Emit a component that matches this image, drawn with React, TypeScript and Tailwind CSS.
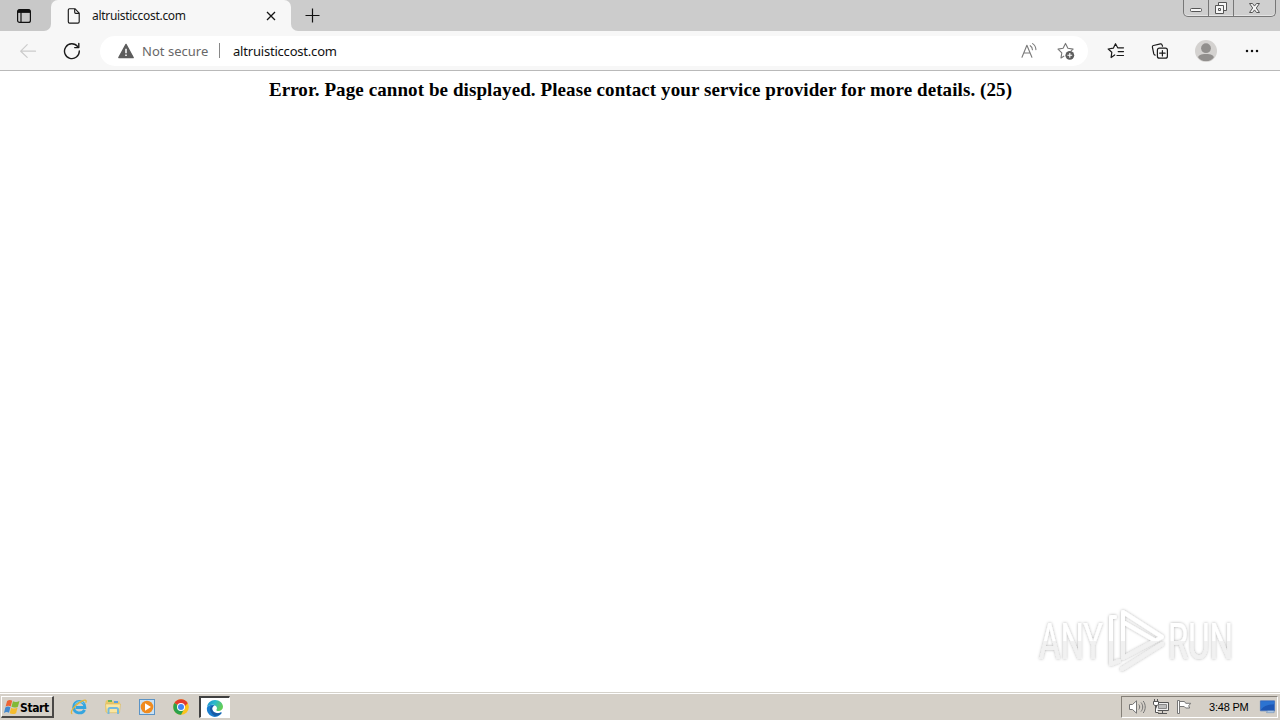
import type { ReactNode } from 'react'
import { clsx } from 'clsx'

interface IconProps {
    className?: string
}

function TabActionsIcon({ className }: IconProps) {
    return (
        <svg viewBox="0 0 16 16" className={className} fill="none" stroke="#111">
            <rect x="1.6" y="1.6" width="12.8" height="12.8" rx="2" strokeWidth="1.2" />
            <path d="M2 3.3h12" strokeWidth="3.2" />
            <path d="M5 4v10" strokeWidth="1.2" />
        </svg>
    )
}

function PageIcon({ className }: IconProps) {
    return (
        <svg viewBox="0 0 16 16" className={className} fill="none" stroke="#1a1a1a" strokeWidth="1.15" strokeLinejoin="round">
            <path d="M3.5.7h5.4l4.3 4.4v8.7a1.3 1.3 0 0 1-1.3 1.3H3.6a1.3 1.3 0 0 1-1.3-1.3V2A1.3 1.3 0 0 1 3.5.7Z" />
            <path d="M8.7.9v3.4c0 .6.4 1 1 1h3.4" />
        </svg>
    )
}

function BackIcon({ className }: IconProps) {
    return (
        <svg viewBox="0 0 18 18" className={className} fill="none" stroke="#cbcbcb" strokeWidth="1.2" strokeLinecap="round" strokeLinejoin="round">
            <path d="M16.5 9.2H2M8.2 2.7 1.7 9.2l6.5 6.2" />
        </svg>
    )
}

function ReloadIcon({ className }: IconProps) {
    return (
        <svg viewBox="0 0 18 18" className={className} fill="none" stroke="#1b1b1b" strokeWidth="1.4" strokeLinecap="round" strokeLinejoin="round">
            <path d="M16.3 9A7.4 7.4 0 1 1 14.7 4.6" />
            <path d="M15.8 1.5v4.1h-4.1" />
        </svg>
    )
}

function WarningIcon({ className }: IconProps) {
    return (
        <svg viewBox="0 0 16 16" className={className}>
            <path d="M8 1.4 15.2 14.6H.8Z" fill="#5c5c5c" stroke="#5c5c5c" strokeWidth="1.3" strokeLinejoin="round" />
            <path d="M8 5.8v4.4M8 11.6v1.5" stroke="#fff" strokeWidth="1.5" />
        </svg>
    )
}

function ReadAloudIcon({ className }: IconProps) {
    return (
        <svg viewBox="0 0 18 18" className={className} fill="none" stroke="#7a7a7a" strokeWidth="1.1" strokeLinecap="round" strokeLinejoin="round">
            <path d="m2 15.2 4.9-12 5 12M3.7 11h6.5" />
            <path d="M10.2 3.7c1.5.8 2.2 2.1 2.2 4M12.6 1.6c2.1 1.3 3.2 3.3 3.3 6" />
        </svg>
    )
}

function AddFavoriteIcon({ className }: IconProps) {
    return (
        <svg viewBox="0 0 18 18" className={className} fill="none">
            <path d="M7.2 14.1 4 15.9l.8-5.1L1 7.1l5.1-.8 2.4-4.9 2.4 4.9 5.2.8-2.2 2" stroke="#777" strokeWidth="1.1" strokeLinejoin="round" />
            <circle cx="12.8" cy="13.3" r="4.4" fill="#5d5d5d" />
            <path d="M12.8 10.9v4.8M10.4 13.3h4.8" stroke="#fff" strokeWidth="1.1" />
        </svg>
    )
}

function FavoritesIcon({ className }: IconProps) {
    return (
        <svg viewBox="0 0 18 18" className={className} fill="none" stroke="#1b1b1b" strokeWidth="1.2" strokeLinejoin="round" strokeLinecap="round">
            <path d="M7.7 12.9 4.1 15.5l.7-5.2L1.2 7l5.1-.8 2.2-4.5 2.2 4.1h5.8M11.2 9.6h5.3M10 13.5h6.5" />
        </svg>
    )
}

function CollectionsIcon({ className }: IconProps) {
    return (
        <svg viewBox="0 0 18 18" className={className} fill="none" stroke="#1b1b1b" strokeWidth="1.2" strokeLinecap="round">
            <path d="M4.2 13.1c-.8 0-1.2-.5-1.4-1.2L1.4 5.2c-.2-.9.3-1.5 1.1-1.7l6.9-1.6c.9-.2 1.5.2 1.7 1l.4 1.3" />
            <rect x="6.4" y="6.2" width="10" height="10" rx="2" />
            <path d="M11.4 8.5v5.4M8.7 11.2h5.4" />
        </svg>
    )
}

function ProfileIcon({ className }: IconProps) {
    return (
        <svg viewBox="0 0 22 22" className={className}>
            <circle cx="11" cy="11" r="11" fill="#d4d2d0" />
            <circle cx="11" cy="8.2" r="4.9" fill="#918f8d" />
            <path d="M3.2 17.4c0-2 2.5-3.4 7.8-3.4s7.8 1.4 7.8 3.4c-1.6 2.3-4.5 3.7-7.8 3.7s-6.2-1.4-7.8-3.7Z" fill="#918f8d" />
        </svg>
    )
}

function WindowsLogo({ className }: IconProps) {
    return (
        <svg viewBox="0 0 18 16" className={className}>
            <path d="M3.3 1.7C5.2.2 7 .3 8.7 1.4L7.1 7.4C5.4 6.3 3.6 6.3 1.7 7.6Z" fill="#ed6434" />
            <path d="M9.5 1.9c1.9 1.2 4.3 1.2 6.9-.2L14.7 7.7c-2.3 1.3-4.7 1.2-6.8.1Z" fill="#82b936" />
            <path d="M1.4 8.5c1.9-1.4 3.7-1.3 5.4-.2l-1.5 5.8C3.6 13 1.8 13 0 14.4Z" fill="#4389cf" />
            <path d="M7.6 8.7c2.1 1.2 4.5 1.2 6.8-.1l-1.6 5.9c-2.3 1.3-4.7 1.2-6.8.1Z" fill="#f5bc2e" />
        </svg>
    )
}

function ExplorerEIcon({ className }: IconProps) {
    return (
        <svg viewBox="0 0 18 18" className={className} fill="none">
            <path d="M14.6 11.8c-2.3 4.7-10.5 4.3-11-2.4-.3-7.5 11.2-8.3 11.3.1H5.6" stroke="#35a5df" strokeWidth="2.8" />
            <path d="M5 6.4c1.7-3.2 6.8-3.6 8.8-.8" stroke="#83d2f3" strokeWidth="1" />
            <path d="M2.3 15.9C-.8 14.9 4 7.8 10 4.1c4.6-2.9 7.4-2.5 5.7.6" stroke="#e5b638" strokeWidth="1.3" />
        </svg>
    )
}

function FolderIcon({ className }: IconProps) {
    return (
        <svg viewBox="0 0 18 18" className={className}>
            <path d="M1.5 3.5 3 2h4l1.4 1.5h7.2V14H1.5Z" fill="#e9c767" />
            <path d="M4 2h4v2H4Z" fill="#68b45a" />
            <path d="M10 3h4v2h-4Z" fill="#5a9fdd" />
            <path d="M1.5 6h15l-1 8.7h-13Z" fill="#fae6a0" stroke="#d9b85b" strokeWidth=".6" />
            <path d="M4.5 16V11.5c0-1 .5-1.5 1.5-1.5h6.5c1 0 1.5.5 1.5 1.5V16" stroke="#74b9dc" strokeWidth="2" fill="none" />
        </svg>
    )
}

function MediaPlayerIcon({ className }: IconProps) {
    return (
        <svg viewBox="0 0 18 18" className={className}>
            <rect x="1.5" y="1.5" width="15" height="15" fill="#c9e1f4" stroke="#5b93c5" />
            <circle cx="9" cy="9" r="6.3" fill="#f08b1e" />
            <path d="m7 5.3 6 3.7-6 3.7Z" fill="#fff" />
        </svg>
    )
}

function ChromeIcon({ className }: IconProps) {
    return (
        <svg viewBox="0 0 18 18" className={className}>
            <circle cx="9" cy="9" r="7.8" fill="#fbc31c" />
            <path d="M9 9 2.3 5.1a7.8 7.8 0 0 1 13.4 0Z" fill="#e33b2e" />
            <path d="M2.3 5.1A7.8 7.8 0 0 0 9 16.8L12.2 11 9 9Z" fill="#2ba24c" />
            <path d="M9 5.1h6.7L12.4 9Z" fill="#e33b2e" />
            <circle cx="9" cy="9" r="4" fill="#fff" />
            <circle cx="9" cy="9" r="3" fill="#4285f4" />
        </svg>
    )
}

function EdgeIcon({ className }: IconProps) {
    return (
        <svg viewBox="0 0 18 18" className={className}>
            <defs>
                <linearGradient id="edge-top" x1="0" y1="0" x2="1" y2=".4">
                    <stop offset="0" stopColor="#1688cf" />
                    <stop offset=".5" stopColor="#2bb9cc" />
                    <stop offset="1" stopColor="#62cd58" />
                </linearGradient>
            </defs>
            <path d="M1 8.3C1.5 4 4.8 1 9 1c4.5 0 8 3.1 8 6.8 0 2.7-2.1 4.2-4.5 4.2-2 0-2.6-.8-1.8-1.8C11.8 8.5 9.5 5.8 6.2 5.8 3.8 5.8 2 6.7 1 8.3Z" fill="url(#edge-top)" />
            <path d="M1 8.4c2-2.8 5.2-3.2 7.7-1.8C6.4 7 5.8 9 6.3 10.8c.8 3 4.5 4.5 8.8 2.7.6-.2.9.1.5.7A8 8 0 0 1 1 8.4Z" fill="#1b7fd0" />
            <path d="M8.7 6.6C4.8 6.1 3.2 9.2 4.5 12.2 5.4 14.5 7.2 16 9 17c2.4 0 4.7-1 6.2-2.8.4-.5.1-.9-.5-.6-4.2 1.5-7.7-.3-8.4-2.8-.5-1.8.2-3.5 2.4-4.2Z" fill="#175ba5" />
        </svg>
    )
}

function SpeakerIcon({ className }: IconProps) {
    return (
        <svg viewBox="0 0 18 18" className={className} fill="none" stroke="#747474">
            <path d="M1.5 6.5h3l4-3.7v12.4l-4-3.7h-3Z" fill="#fff" />
            <path d="M10.8 6.5c1.2 1.5 1.2 3.5 0 5M13 4.5c2.3 2.7 2.3 6.3 0 9M15.2 3c2.7 3.6 2.7 8.4 0 12" />
        </svg>
    )
}

function NetworkIcon({ className }: IconProps) {
    return (
        <svg viewBox="0 0 18 18" className={className} fill="none" stroke="#555">
            <path d="M4.5 4.5h12v8h-12Z" fill="#eee" />
            <path d="M6.5 6.5h8v4h-8Z" fill="#bdbdbd" stroke="#888" />
            <path d="M6 15.5h9M10.5 13v2" />
            <path d="M1.5 3.5h5v3l-1.5 1H3l-1.5-1ZM2.5 1v2.5M5.5 1v2.5M3.5 7.5v7h3" fill="#fff" />
        </svg>
    )
}

function FlagIcon({ className }: IconProps) {
    return (
        <svg viewBox="0 0 18 18" className={className} fill="none" stroke="#777">
            <path d="M4.5 3.5h5l1.2 1.8h5l-2 2.5 1 2.2h-4L9.2 8.5H4.5Z" fill="#fff" />
            <path d="M2.5 2.5h2v13h-2Z" fill="#fff" />
        </svg>
    )
}

function DesktopIcon({ className }: IconProps) {
    return (
        <svg viewBox="0 0 18 16" className={className}>
            <path d="M1.5 1.5h15v10.5h-15Z" fill="#1d57b5" stroke="#4b77bd" />
            <path d="M2 11c3-4 7-5.5 14-6v-3H2Z" fill="#2c73d1" />
            <path d="M9 12h7v2H8Z" fill="#b9d2ed" stroke="#567ba8" strokeWidth=".5" />
        </svg>
    )
}

function Watermark({ className }: IconProps) {
    return (
        <svg viewBox="0 0 244 76" className={className}>
            <defs>
                <linearGradient id="mark-fill" x1="0" y1="0" x2="0" y2="76" gradientUnits="userSpaceOnUse">
                    <stop offset=".51" stopColor="#fff" />
                    <stop offset=".52" stopColor="#f1f1f1" />
                </linearGradient>
                <filter id="mark-shadow" x="-10%" y="-10%" width="120%" height="120%">
                    <feDropShadow dx="0" dy="0" stdDeviation="1.7" floodColor="#000" floodOpacity=".32" />
                </filter>
            </defs>
            <g filter="url(#mark-shadow)">
                <g fill="url(#mark-fill)" className="font-['Roboto',sans-serif] text-[50px] font-normal">
                    <text x="7" y="57" textLength="64" lengthAdjust="spacingAndGlyphs">ANY</text>
                    <text x="136" y="57" textLength="65" lengthAdjust="spacingAndGlyphs">RUN</text>
                </g>
                <g fill="none" stroke="url(#mark-fill)" strokeWidth="4" strokeLinejoin="round" strokeLinecap="round">
                    <path d="M83 15h-4v47l8-3" />
                    <path d="M91 54V10l39 25-39 21" />
                    <path d="m91 20 31 18" />
                    <path d="m90 67 40-25" />
                </g>
            </g>
        </svg>
    )
}

function WindowControls() {
    return (
        <div className="mr-[4px] flex h-[17px] w-[93px] rounded-b-[5px] border border-t-0 border-[#777] bg-[#cfcfcf] shadow-[inset_0_-1px_0_#e4e4e4]">
            <svg viewBox="0 0 91 16" className="h-4 w-[91px]" fill="#f6f6f6" stroke="#555">
                <path d="M24.5 0v16M49.5 0v16" stroke="#777" />
                <rect x="6.5" y="8.5" width="11" height="3" rx="1" />
                <path d="M34.5 2.5h8v8h-8Z" />
                <path d="M31.5 5.5h8v8h-8ZM34.5 8.5h2v2h-2Z" />
                <path d="M65.5 3.5h3l2 2.6 2-2.6h3L72.3 8l3.2 4.5h-3l-2-2.6-2 2.6h-3L68.7 8Z" />
            </svg>
        </div>
    )
}

function TabStrip() {
    return (
        <header className="flex h-[31px] items-start bg-[#cccccc]">
            <div className="flex h-[31px] w-[51px] items-center bg-[#f7f7f7]">
                <div className="flex h-[31px] w-full items-center rounded-br-[7px] bg-[#c8c8c8] pl-4">
                    <TabActionsIcon className="h-4 w-4" />
                </div>
            </div>
            <div className="flex h-[31px] w-[240px] items-center rounded-t-[7px] bg-[#f7f7f7] pl-[15px] pr-[15px]">
                <PageIcon className="h-4 w-4" />
                <span className="ml-[10px] w-[145px] whitespace-nowrap text-[12px] tracking-[-0.3px] text-[#151515]">altruisticcost.com</span>
                <svg viewBox="0 0 10 10" className="ml-auto h-[10px] w-[10px]" stroke="#151515" strokeWidth="1.3">
                    <path d="m1 1 8 8M9 1 1 9" />
                </svg>
            </div>
            <div className="h-[31px] grow bg-[#f7f7f7]">
                <div className="flex h-[31px] items-start rounded-bl-[7px] bg-[#cccccc]">
                    <svg viewBox="0 0 15 15" className="ml-[14px] mt-2 h-[15px] w-[15px]" stroke="#111" strokeWidth="1.2">
                        <path d="M7.5.5v14M.5 7.5h14" />
                    </svg>
                    <div className="ml-auto">
                        <WindowControls />
                    </div>
                </div>
            </div>
        </header>
    )
}

function Toolbar() {
    return (
        <div className="flex h-10 items-center border-b border-[#b9b9b9] bg-[#f7f7f7]">
            <BackIcon className="ml-[19px] h-[18px] w-[18px]" />
            <ReloadIcon className="ml-[26px] h-[18px] w-[18px]" />
            <div className="ml-[19px] flex h-[30px] w-[988px] items-center rounded-full bg-white pl-[18px] pr-[13px]">
                <WarningIcon className="h-4 w-4" />
                <span className="ml-2 w-[69px] whitespace-nowrap pt-[2px] text-[13px] tracking-[0.02px] text-[#686868]">Not secure</span>
                <div className="ml-2 h-[15px] w-px bg-[#888]" />
                <span className="ml-[13px] whitespace-nowrap pt-[2px] text-[13px] tracking-[-0.2px] text-[#111]">altruisticcost.com</span>
                <ReadAloudIcon className="ml-auto mr-[19px] h-[18px] w-[18px]" />
                <AddFavoriteIcon className="h-[18px] w-[18px]" />
            </div>
            <FavoritesIcon className="ml-[19px] h-[18px] w-[18px]" />
            <CollectionsIcon className="ml-[26px] h-[18px] w-[18px]" />
            <ProfileIcon className="ml-[26px] h-[22px] w-[22px]" />
            <svg viewBox="0 0 14 4" className="ml-[28px] h-1 w-3.5" fill="#111">
                <circle cx="2" cy="2" r="1.25" />
                <circle cx="7" cy="2" r="1.25" />
                <circle cx="12" cy="2" r="1.25" />
            </svg>
        </div>
    )
}

function TaskbarItem({ active, children }: { active?: boolean; children: ReactNode }) {
    return (
        <div
            className={clsx(
                'flex h-[22px] items-center justify-center',
                active
                    ? 'ml-px w-[31px] border-2 border-b border-r border-[#404040] border-b-white border-r-white bg-white'
                    : 'w-[34px]'
            )}
        >
            {children}
        </div>
    )
}

function Taskbar() {
    return (
        <footer className="flex h-7 items-start border-t border-[#d5d2cb] bg-[#d5d0c8] pt-[3px] shadow-[inset_0_1px_0_#fff]">
            <div className="ml-px flex h-[22px] w-[53px] items-center border border-b-2 border-r-2 border-white border-b-[#4a4846] border-r-[#4a4846] pl-0.5">
                <WindowsLogo className="h-4 w-[17px] shrink-0" />
                <span className="-ml-px whitespace-nowrap pt-[2px] font-['DejaVu_Sans_Condensed','DejaVu_Sans',sans-serif] text-[12px] font-bold leading-4 tracking-[-0.4px] text-black">Start</span>
            </div>
            <div className="ml-2 flex items-center">
                <TaskbarItem><ExplorerEIcon className="h-[18px] w-[18px]" /></TaskbarItem>
                <TaskbarItem><FolderIcon className="h-[18px] w-[18px]" /></TaskbarItem>
                <TaskbarItem><MediaPlayerIcon className="h-[18px] w-[18px]" /></TaskbarItem>
                <TaskbarItem><ChromeIcon className="h-[18px] w-[18px]" /></TaskbarItem>
                <TaskbarItem active><EdgeIcon className="h-[18px] w-[18px]" /></TaskbarItem>
            </div>
            <div className="ml-auto mr-[2px] flex h-[22px] w-[157px] items-center border border-[#858078] border-b-white border-r-white pl-[6px]">
                <SpeakerIcon className="h-[18px] w-[18px]" />
                <NetworkIcon className="ml-[6px] h-[18px] w-[18px]" />
                <FlagIcon className="ml-[5px] h-[18px] w-[18px]" />
                <span className="ml-[16px] w-[42px] whitespace-nowrap font-['Liberation_Sans',Arial,sans-serif] text-[11px] tracking-[-0.2px] text-black">3:48 PM</span>
                <DesktopIcon className="ml-[8px] h-4 w-[17px]" />
            </div>
        </footer>
    )
}

export default function App() {
    return (
        <div className="flex h-[720px] w-[1280px] flex-col overflow-hidden bg-white font-['Noto_Sans',sans-serif]">
            <TabStrip />
            <Toolbar />
            <main className="relative flex-1 bg-white pt-2 text-center">
                <p className="whitespace-nowrap pl-px font-['Liberation_Serif','Times_New_Roman',serif] text-[19px] font-bold leading-[22px] tracking-[0.09px] text-black">
                    Error. Page cannot be displayed. Please contact your service provider for more details. (25)
                </p>
                <Watermark className="absolute bottom-[14px] right-1 h-[76px] w-[244px]" />
            </main>
            <Taskbar />
        </div>
    )
}
